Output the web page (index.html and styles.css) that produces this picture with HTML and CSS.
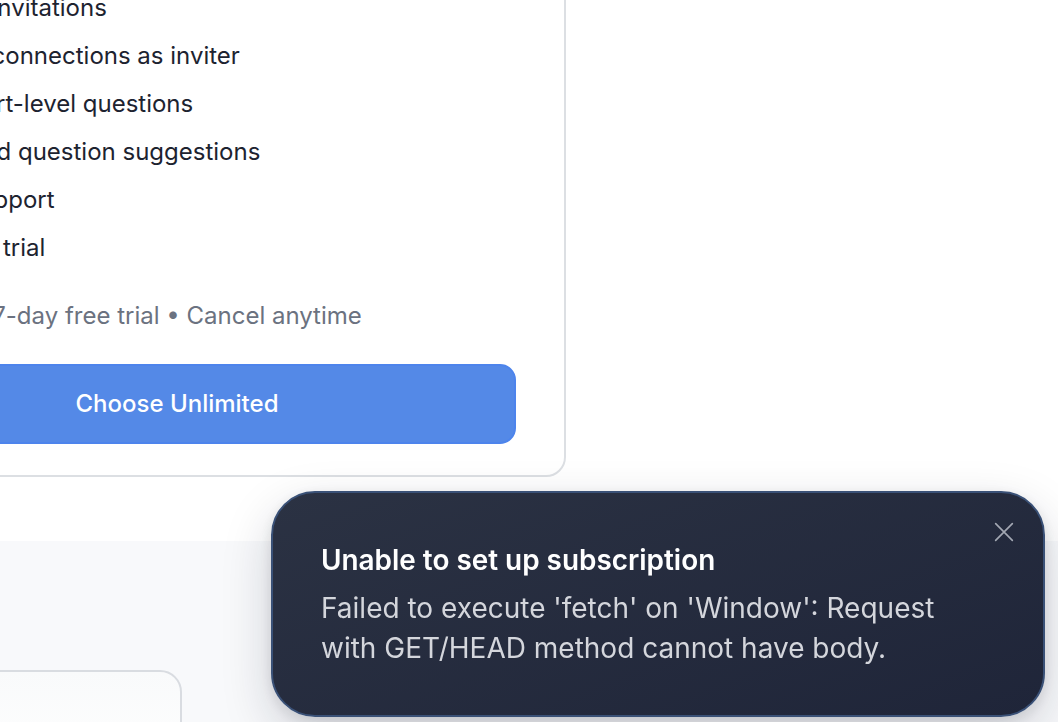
FILE: index.html
```html
<!DOCTYPE html>
<html lang="en">
<head>
<meta charset="utf-8">
<title>Plans</title>
<link rel="stylesheet" href="styles.css">
</head>
<body>
<main class="page">
  <section class="plans">
    <div class="plan-card">
      <ul class="features">
        <li class="feature"><svg class="check" viewBox="0 0 24 24"><path d="M5 12.5l4.5 4.5L19 7.5"/></svg><span>Unlimited invitations</span></li>
        <li class="feature"><svg class="check" viewBox="0 0 24 24"><path d="M5 12.5l4.5 4.5L19 7.5"/></svg><span>Unlimited connections as inviter</span></li>
        <li class="feature"><svg class="check" viewBox="0 0 24 24"><path d="M5 12.5l4.5 4.5L19 7.5"/></svg><span>Daily expert-level questions</span></li>
        <li class="feature"><svg class="check" viewBox="0 0 24 24"><path d="M5 12.5l4.5 4.5L19 7.5"/></svg><span>AI-powered question suggestions</span></li>
        <li class="feature"><svg class="check" viewBox="0 0 24 24"><path d="M5 12.5l4.5 4.5L19 7.5"/></svg><span>Priority support</span></li>
        <li class="feature"><svg class="check" viewBox="0 0 24 24"><path d="M5 12.5l4.5 4.5L19 7.5"/></svg><span>7-day free trial</span></li>
      </ul>
      <p class="trial-note">7-day free trial • Cancel anytime</p>
      <button class="choose-btn" type="button">Choose Unlimited</button>
    </div>
  </section>
  <section class="faq">
    <div class="faq-card"></div>
  </section>
</main>

<div class="toast" role="alert">
  <button class="toast-close" type="button" aria-label="Close">
    <svg viewBox="0 0 24 24"><path d="M2 2L22 22M22 2L2 22"/></svg>
  </button>
  <h2 class="toast-title">Unable to set up subscription</h2>
  <p class="toast-body">Failed to execute 'fetch' on 'Window': Request with GET/HEAD method cannot have body.</p>
</div>
</body>
</html>
```
FILE: styles.css
```css
* { box-sizing: border-box; }

html, body {
  margin: 0;
  height: 722px;
  overflow: hidden;
  background: #ffffff;
  font-family: Inter, "Noto Sans", "Liberation Sans", sans-serif;
}

.page {
  display: flex;
  flex-direction: column;
  height: 100%;
}

.plans {
  background: #ffffff;
  height: 541px;
  flex: none;
}

.plan-card {
  margin-top: -60px;
  margin-left: -212px;
  width: 778px;
  border: 2px solid #dcdfe3;
  border-radius: 20px;
  background: #ffffff;
  padding: 48px 48px 31px 48px;
}

.features {
  list-style: none;
  margin: 0;
  padding: 0;
  display: flex;
  flex-direction: column;
  gap: 12px;
}

.feature {
  display: flex;
  align-items: center;
  gap: 16px;
  font-size: 24px;
  line-height: 36px;
  color: #1d2330;
}

.check {
  width: 24px;
  height: 24px;
  flex: none;
  fill: none;
  stroke: #22c55e;
  stroke-width: 2.5;
  stroke-linecap: round;
  stroke-linejoin: round;
}

.trial-note {
  margin: 32px 0 0;
  text-align: center;
  font-size: 24px;
  line-height: 36px;
  color: #6b7280;
}

.choose-btn {
  display: block;
  width: 100%;
  margin-top: 30px;
  height: 80px;
  border: 2px solid #4d84ec;
  border-radius: 16px;
  background: #5489e7;
  color: #ffffff;
  font-family: inherit;
  font-size: 24px;
  font-weight: 500;
  line-height: 36px;
}

.faq {
  flex: 1;
  background: #f8f9fb;
  padding-top: 129px;
}

.faq-card {
  margin-left: -200px;
  width: 382px;
  height: 200px;
  border: 2px solid #d9dce1;
  border-radius: 22px;
  background: linear-gradient(#f9fafb, #ffffff 60%);
}

.toast {
  position: fixed;
  right: 13px;
  bottom: 5px;
  width: 774px;
  height: 226px;
  padding: 47px 100px 0 48px;
  border: 2px solid #3a5177;
  border-radius: 44px;
  background: linear-gradient(160deg, #2b3243 0%, #1f2539 100%);
  box-shadow: 0 18px 50px rgba(15, 23, 42, 0.18), 0 4px 14px rgba(15, 23, 42, 0.1);
  color: #ffffff;
}

.toast-title {
  margin: 0;
  font-size: 27.9px;
  line-height: 40px;
  font-weight: 600;
  color: #ffffff;
}

.toast-body {
  margin: 8px 0 0;
  font-size: 28px;
  line-height: 40px;
  color: #d4d6dc;
}

.toast-close {
  position: absolute;
  top: 27px;
  right: 27px;
  width: 24px;
  height: 24px;
  padding: 2px;
  border: 0;
  background: transparent;
}

.toast-close svg {
  display: block;
  width: 20px;
  height: 20px;
  fill: none;
  stroke: #a3a8b3;
  stroke-width: 2;
  stroke-linecap: round;
}
```
